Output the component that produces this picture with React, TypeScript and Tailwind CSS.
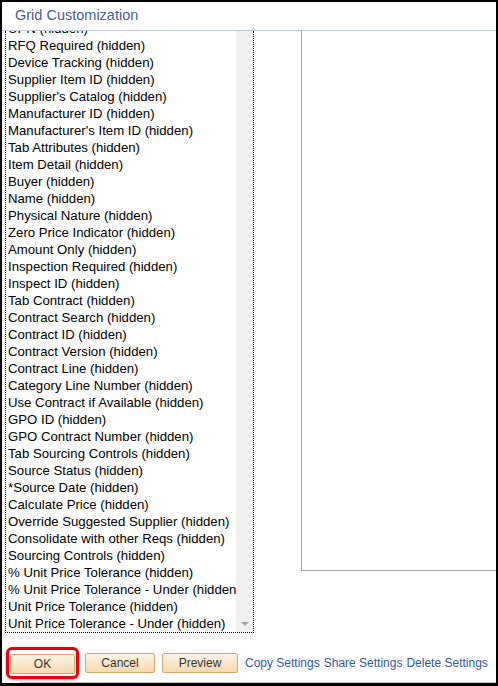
import React from 'react';

const fields = [
  'UPN (hidden)',
  'RFQ Required (hidden)',
  'Device Tracking (hidden)',
  'Supplier Item ID (hidden)',
  "Supplier's Catalog (hidden)",
  'Manufacturer ID (hidden)',
  "Manufacturer's Item ID (hidden)",
  'Tab Attributes (hidden)',
  'Item Detail (hidden)',
  'Buyer (hidden)',
  'Name (hidden)',
  'Physical Nature (hidden)',
  'Zero Price Indicator (hidden)',
  'Amount Only (hidden)',
  'Inspection Required (hidden)',
  'Inspect ID (hidden)',
  'Tab Contract (hidden)',
  'Contract Search (hidden)',
  'Contract ID (hidden)',
  'Contract Version (hidden)',
  'Contract Line (hidden)',
  'Category Line Number (hidden)',
  'Use Contract if Available (hidden)',
  'GPO ID (hidden)',
  'GPO Contract Number (hidden)',
  'Tab Sourcing Controls (hidden)',
  'Source Status (hidden)',
  '*Source Date (hidden)',
  'Calculate Price (hidden)',
  'Override Suggested Supplier (hidden)',
  'Consolidate with other Reqs (hidden)',
  'Sourcing Controls (hidden)',
  '% Unit Price Tolerance (hidden)',
  '% Unit Price Tolerance - Under (hidden)',
  'Unit Price Tolerance (hidden)',
  'Unit Price Tolerance - Under (hidden)',
];

const PsButton = ({ label, className = '' }: { label: string; className?: string }) => (
  <button
    className={`h-[20px] rounded-[2px] border border-[#d6a670] bg-gradient-to-b from-[#fdf4e6] to-[#f6d9b0] text-[12px] text-[#333] leading-none ${className}`}
  >
    {label}
  </button>
);

export default function App() {
  return (
    <div className="w-[498px] h-[686px] bg-white border-t-2 border-x-2 border-b-[3px] border-black flex flex-col overflow-hidden font-['Liberation_Sans',Arial,sans-serif]">
      <div className="relative z-10 h-[29px] shrink-0 bg-white border-b border-[#c6ccd4] flex items-center pl-[13px]">
        <span className="text-[14.5px] text-[#4e5e8e]">Grid Customization</span>
      </div>

      <div className="flex h-[602px] shrink-0 overflow-hidden">
        <div className="ml-[3px] w-[249px] h-[602px] border-x border-b border-dotted border-black flex overflow-hidden">
          <div className="flex-1 overflow-hidden">
            <ul className="-mt-[11px] pl-[2px]">
              {fields.map((f) => (
                <li key={f} className="h-[17px] leading-[17px] text-[13.2px] text-black whitespace-nowrap">
                  {f}
                </li>
              ))}
            </ul>
          </div>
          <div className="w-[17px] bg-[#f0f0f0] flex flex-col justify-end items-center pb-[6px]">
            <div className="w-0 h-0 border-l-[4px] border-r-[4px] border-t-[4px] border-l-transparent border-r-transparent border-t-[#a3a3a3]" />
          </div>
        </div>
        <div className="ml-[47px] flex-1 h-[540px] border-l border-b border-[#a8a8a8]" />
      </div>

      <div className="flex items-center mt-[14px] pl-[4px]">
        <div className="rounded-[6px] border-[3.5px] border-[#e8000b] px-[1px] py-[1px] shadow-[0_1px_3px_rgba(0,0,0,0.35)]">
          <PsButton label="OK" className="w-[65px]" />
        </div>
        <PsButton label="Cancel" className="w-[70px] ml-[6px]" />
        <PsButton label="Preview" className="w-[76px] ml-[7px]" />
        <div className="ml-[7px] flex gap-[4px] text-[12px] text-[#3658a4] whitespace-nowrap">
          <a>Copy Settings</a>
          <a>Share Settings</a>
          <a>Delete Settings</a>
        </div>
      </div>

      <div className="mt-auto ml-[18px] h-[1px] bg-[#c8c8c8]" />
    </div>
  );
}
